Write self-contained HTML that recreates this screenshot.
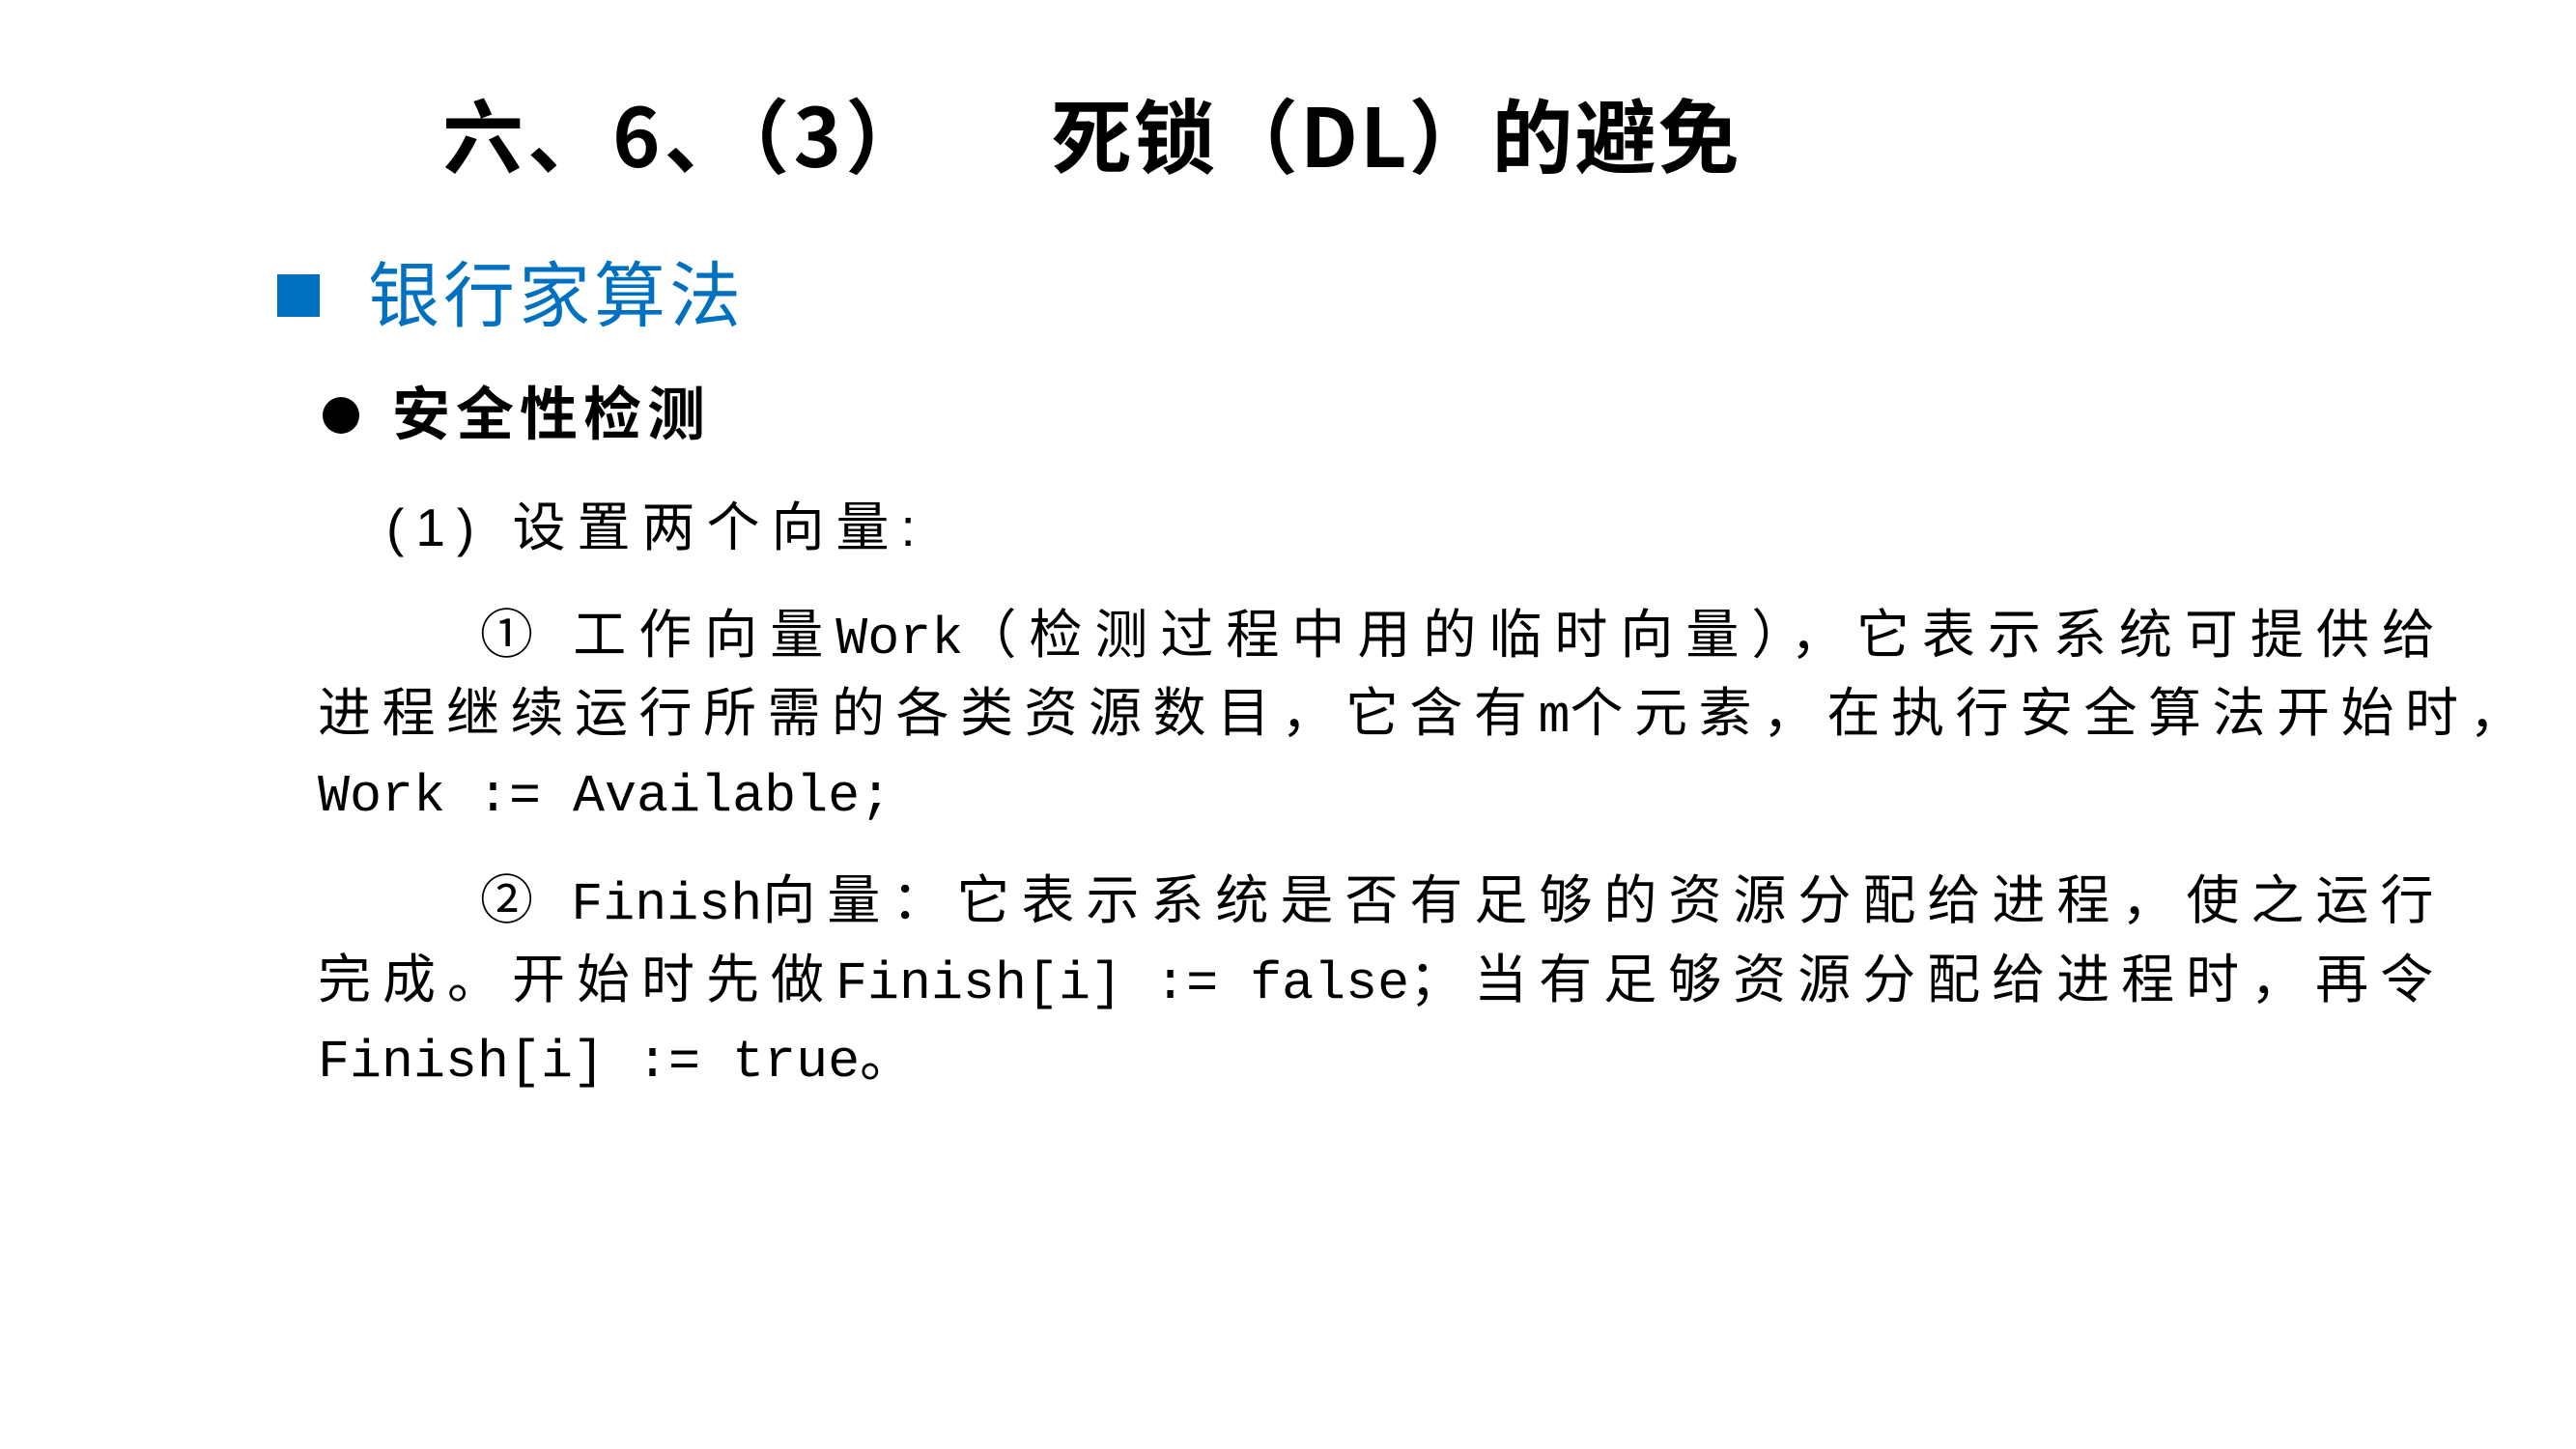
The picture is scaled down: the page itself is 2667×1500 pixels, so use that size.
<!DOCTYPE html>
<html><head><meta charset="utf-8"><style>
html,body{margin:0;padding:0;background:#fff;}
body{width:2667px;height:1500px;position:relative;overflow:hidden;font-family:"Liberation Sans","Noto Sans CJK SC",sans-serif;color:#000;}
.l{position:absolute;white-space:nowrap;line-height:100px;height:100px;}
.t{font-size:84px;font-weight:bold;font-family:"Noto Sans CJK SC",sans-serif;}
.b{font-size:74px;color:#0070c0;letter-spacing:4px;}
.c{font-size:60px;font-weight:bold;letter-spacing:6px;}
.p{font-size:55px;letter-spacing:12px;}
.m{font-family:"Liberation Mono","Noto Sans CJK SC",monospace;letter-spacing:0;}
</style></head><body>
<div class="l t" style="left:458px;top:88px;letter-spacing:4px;">六、6、（3）</div>
<div class="l t" style="left:1088px;top:88px;letter-spacing:2px;">死锁（DL）的避免</div>

<div style="position:absolute;left:287px;top:284px;width:44px;height:44px;background:#0070c0;"></div>
<div class="l b" style="left:381px;top:257px;">银行家算法</div>

<div style="position:absolute;left:334px;top:411px;width:38px;height:38px;border-radius:50%;background:#000;"></div>
<div class="l c" style="left:406px;top:380px;">安全性检测</div>

<div class="l p" style="left:400px;top:496px;">(1) 设置两个向量:</div>

<div class="l p" style="left:497px;top:607px;letter-spacing:13px;">① 工作向量<span class="m">Work</span>（检测过程中用的临时向量），它表示系统可提供给</div>
<div class="l p" style="left:329px;top:688px;letter-spacing:11.5px;">进程继续运行所需的各类资源数目，它含有<span class="m">m</span>个元素，在执行安全算法开始时，</div>
<div class="l p" style="left:329px;top:770px;"><span class="m">Work := Available;</span></div>

<div class="l p" style="left:497px;top:882px;">② <span class="m">Finish</span>向量：它表示系统是否有足够的资源分配给进程，使之运行</div>
<div class="l p" style="left:329px;top:964px;">完成。开始时先做<span class="m">Finish[i] := false</span>；当有足够资源分配给进程时，再令</div>
<div class="l p" style="left:329px;top:1045px;"><span class="m">Finish[i] := true</span>。</div>
</body></html>
